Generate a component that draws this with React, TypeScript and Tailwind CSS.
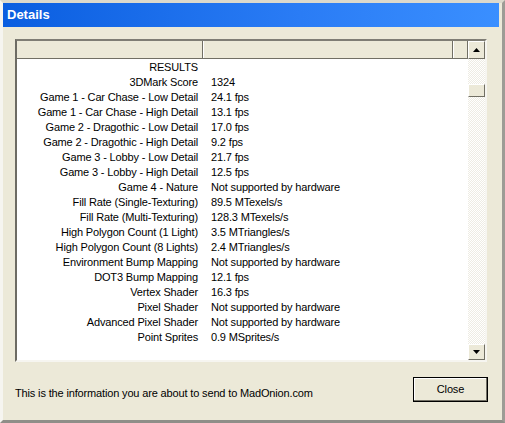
import type { ReactNode } from 'react'

const rows: [string, string][] = [
  ['RESULTS', ''],
  ['3DMark Score', '1324'],
  ['Game 1 - Car Chase - Low Detail', '24.1 fps'],
  ['Game 1 - Car Chase - High Detail', '13.1 fps'],
  ['Game 2 - Dragothic - Low Detail', '17.0 fps'],
  ['Game 2 - Dragothic - High Detail', '9.2 fps'],
  ['Game 3 - Lobby - Low Detail', '21.7 fps'],
  ['Game 3 - Lobby - High Detail', '12.5 fps'],
  ['Game 4 - Nature', 'Not supported by hardware'],
  ['Fill Rate (Single-Texturing)', '89.5 MTexels/s'],
  ['Fill Rate (Multi-Texturing)', '128.3 MTexels/s'],
  ['High Polygon Count (1 Light)', '3.5 MTriangles/s'],
  ['High Polygon Count (8 Lights)', '2.4 MTriangles/s'],
  ['Environment Bump Mapping', 'Not supported by hardware'],
  ['DOT3 Bump Mapping', '12.1 fps'],
  ['Vertex Shader', '16.3 fps'],
  ['Pixel Shader', 'Not supported by hardware'],
  ['Advanced Pixel Shader', 'Not supported by hardware'],
  ['Point Sprites', '0.9 MSprites/s'],
]

// raised 3d button face, classic windows look
const RaisedBox = ({ className, children }: { className: string; children?: ReactNode }) => (
  <div className={`border border-t-white border-l-white border-r-[#716f64] border-b-[#716f64] bg-[#ece9d8] ${className}`}>
    {children}
  </div>
)

const Arrow = ({ down }: { down?: boolean }) => (
  <svg width="7" height="4" viewBox="0 0 7 4">
    {down ? <polygon points="0,0 7,0 3.5,4" fill="#000" /> : <polygon points="0,4 7,4 3.5,0" fill="#000" />}
  </svg>
)

export default function App() {
  return (
    <div
      className="w-[505px] h-[423px] bg-[#ece9d8] border-t-[3px] border-t-[#dcd9cc] border-l-[3px] border-l-[#f6f5f0] border-r-[3px] border-r-[#9d9c95] border-b-[3px] border-b-[#8f8e88] flex flex-col text-[11px] tracking-[-0.15px] text-black"
      style={{ fontFamily: '"Liberation Sans", Arial, sans-serif' }}
    >
      <div className="h-[24px] mr-[3px] flex items-center pl-[4px] bg-[linear-gradient(to_right,#0a5ee0,#2a7cf5_60%,#3a8fff)]">
        <span className="text-white font-bold text-[13px] tracking-normal">Details</span>
      </div>

      <div className="flex-1 flex flex-col px-[12px] pt-[12px]">
        {/* list view */}
        <div className="h-[323px] w-[472px] border-2 border-t-[#7f7d74] border-l-[#6d6b63] border-r-[#f6f5f0] border-b-[#f6f5f0] bg-white flex">
          <div className="flex-1 flex flex-col overflow-hidden">
            <div className="h-[18px] flex bg-[#ece9d8] border-b border-b-[#716f64]">
              <div className="w-[186px] border-r border-r-[#716f64]" />
              <div className="w-[1px] bg-white" />
              <div className="w-[249px] border-r border-r-[#716f64]" />
              <div className="w-[1px] bg-white" />
              <div className="flex-1 border-r border-r-[#716f64]" />
            </div>
            <div className="pt-[1px]">
              {rows.map(([label, value]) => (
                <div key={label} className="h-[15px] flex items-center leading-[15px]">
                  <div className="w-[187px] text-right pr-[6px] whitespace-nowrap">{label}</div>
                  <div className="pl-[7px] whitespace-nowrap">{value}</div>
                </div>
              ))}
            </div>
          </div>

          {/* scrollbar */}
          <div className="w-[17px] flex flex-col bg-[repeating-conic-gradient(#ffffff_0_25%,#eeece3_0_50%)] bg-[length:2px_2px]">
            <RaisedBox className="h-[18px] flex items-center justify-center">
              <Arrow />
            </RaisedBox>
            <div className="h-[25px]" />
            <RaisedBox className="h-[13px]" />
            <div className="flex-1" />
            <RaisedBox className="h-[16px] flex items-center justify-center">
              <Arrow down />
            </RaisedBox>
          </div>
        </div>

        <div className="flex items-start justify-between mt-[15px]">
          <span className="pt-[8px]">This is the information you are about to send to MadOnion.com</span>
          <button className="w-[75px] h-[25px] border border-black bg-[#ece9d8] mr-[2px] flex items-center justify-center shadow-[inset_-1px_-1px_0_#716f64,inset_1px_1px_0_#ffffff]">
            Close
          </button>
        </div>
      </div>
    </div>
  )
}
